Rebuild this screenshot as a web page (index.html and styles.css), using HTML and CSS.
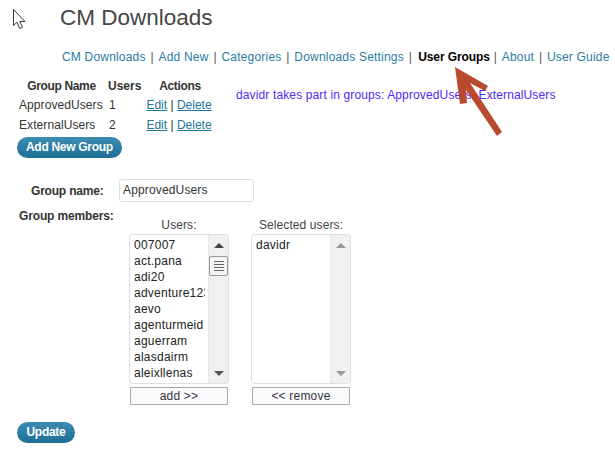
FILE: index.html
```html
<!DOCTYPE html>
<html lang="en">
<head>
<meta charset="utf-8">
<title>CM Downloads</title>
<link rel="stylesheet" href="styles.css">
</head>
<body>
<svg class="cursor" width="14" height="20" viewBox="0 0 14 20"><path d="M.5.500v16l3.500-3.300 2.700 6.300 2.800-1.200-2.700-5.800h5.200z" fill="#fff" stroke="#3a3a3a" stroke-width="1"/></svg>
<h1 class="title">CM Downloads</h1>
<nav class="nav">
  <a>CM Downloads</a><span class="sep">|</span><a>Add New</a><span class="sep">|</span><a>Categories</a><span class="sep">|</span><a>Downloads Settings</a><span class="sep">|</span><b>User Groups</b><span class="sep">|</span><a>About</a><span class="sep">|</span><a>User Guide</a>
</nav>
<div class="groups">
  <div class="group-list">
    <div class="grow head"><span class="c1 tight">Group Name</span><span class="c2">Users</span><span class="c3 tight">Actions</span></div>
    <div class="grow"><span class="c1 left">ApprovedUsers</span><span class="c2 left">1</span><span class="c3 acts"><u>Edit</u> | <u>Delete</u></span></div>
    <div class="grow"><span class="c1 left">ExternalUsers</span><span class="c2 left">2</span><span class="c3 acts"><u>Edit</u> | <u>Delete</u></span></div>
    <button class="pill add-group">Add New Group</button>
  </div>
  <p class="takes">davidr takes part in groups: ApprovedUsers, ExternalUsers</p>
</div>
<div class="name-row"><label class="name-label">Group name:</label><div class="input">ApprovedUsers</div></div>
<div class="members-label">Group members:</div>
<div class="pickers">
  <div class="picker">
    <div class="picker-title">Users:</div>
    <div class="listbox">
      <div class="items"><div>007007</div><div>act.pana</div><div>adi20</div><div>adventure123</div><div>aevo</div><div>agenturmeid</div><div>aguerram</div><div>alasdairm</div><div>aleixllenas</div></div>
      <div class="bar">
        <svg class="arrow-up" width="10" height="5" viewBox="0 0 10 5"><path d="M5 0l5 5H0z" fill="#444"/></svg>
        <div class="thumb"><i></i><i></i><i></i><i></i></div>
        <svg class="arrow-down" width="10" height="5" viewBox="0 0 10 5"><path d="M0 0h10L5 5z" fill="#555"/></svg>
      </div>
    </div>
    <button class="plain">add &gt;&gt;</button>
  </div>
  <div class="picker">
    <div class="picker-title">Selected users:</div>
    <div class="listbox">
      <div class="items"><div>davidr</div></div>
      <div class="bar">
        <svg class="arrow-up" width="10" height="5" viewBox="0 0 10 5"><path d="M5 0l5 5H0z" fill="#999"/></svg>
        <svg class="arrow-down" width="10" height="5" viewBox="0 0 10 5"><path d="M0 0h10L5 5z" fill="#999"/></svg>
      </div>
    </div>
    <button class="plain">&lt;&lt; remove</button>
  </div>
</div>
<button class="pill update">Update</button>
<svg class="red-arrow" width="48" height="70" viewBox="0 0 48 70"><path d="M0 0L33 19 30 24 15 16 47 65 42 69 11 23 12 36 5 37z" fill="#b84a30"/></svg>
</body>
</html>
```
FILE: styles.css
```css
html, body { margin: 0; padding: 0; }
body {
  position: relative;
  width: 615px;
  height: 449px;
  overflow: hidden;
  background: #fff;
  color: #333;
  font: 12px/16px "Liberation Sans", Arial, sans-serif;
}
.cursor { position: absolute; left: 13px; top: 9px; }
.title {
  margin: 0;
  padding: 3px 0 0 60px;
  height: 45px;
  box-sizing: border-box;
  font-size: 22.5px;
  line-height: 30px;
  font-weight: 400;
  color: #464646;
}
.nav { padding: 4px 0 0 62px; height: 31px; box-sizing: border-box; white-space: nowrap; }
.nav a { color: #2a7ba3; letter-spacing: 0.19px; }
.nav b { color: #000; letter-spacing: -0.1px; margin: 0 -1px 0 1.500px; }
.sep { color: #555; margin: 0 4.900px; }
.groups { display: flex; }
.group-list { width: 236px; padding-left: 17px; box-sizing: border-box; flex: none; }
.grow { display: flex; height: 20px; line-height: 20px; white-space: nowrap; }
.head { font-weight: 700; height: 19px; }
.c1 { width: 90px; text-align: center; flex: none; padding-right: 1px; box-sizing: border-box; }
.c1.left { text-align: left; padding-left: 2px; letter-spacing: 0.08px; }
.c2 { width: 37px; flex: none; padding-left: 1px; box-sizing: border-box; }
.c2.left { padding-left: 2px; }
.c3 { width: 80px; text-align: center; flex: none; padding-right: 8px; box-sizing: border-box; }
.c3.acts { padding-right: 10px; }
.c3 u { color: #21759b; }
.tight { letter-spacing: -0.35px; }
.pill {
  display: block;
  height: 21px;
  padding: 0 9px;
  border: 0;
  border-radius: 11px;
  background: linear-gradient(#3d8cb3, #1e6f96);
  color: #fff;
  letter-spacing: -0.3px;
  font: 700 12px/21px "Liberation Sans", Arial, sans-serif;
}
.add-group { margin-top: 2px; }
.takes { margin: 11px 0 0; color: #4a2cf5; white-space: nowrap; letter-spacing: 0.13px; }
.name-row { display: flex; align-items: center; margin-top: 21px; }
.name-label { width: 119px; padding-left: 31px; box-sizing: border-box; font-weight: 700; white-space: nowrap; letter-spacing: -0.2px; }
.input {
  width: 135px;
  height: 23px;
  box-sizing: border-box;
  padding-left: 3px;
  border: 1px solid #dfdfdf;
  border-radius: 3px;
  line-height: 21px;
  letter-spacing: 0.15px;
}
.members-label { margin: 6px 0 0 19px; font-weight: 700; line-height: 16px; letter-spacing: -0.15px; }
.pickers { display: flex; gap: 22px; margin: -7px 0 0 129px; }
.picker { width: 100px; }
.picker-title { text-align: center; line-height: 16px; height: 17px; letter-spacing: 0.1px; color: #444; }
.listbox { display: flex; width: 100px; height: 150px; box-sizing: border-box; border: 1px solid #dfdfdf; border-radius: 3px; overflow: hidden; }
.items { width: 78px; flex: none; padding: 2px 3px 0 4px; box-sizing: border-box; color: #222; line-height: 16px; white-space: nowrap; letter-spacing: 0.25px; }
.items div { overflow: hidden; }
.bar { flex: 1; background: #f0f0f0; border-left: 1px solid #e8e8e8; display: flex; flex-direction: column; align-items: center; }
.arrow-up { margin-top: 8px; }
.arrow-down { margin-top: auto; margin-bottom: 7px; }
.thumb { margin-top: 8px; width: 19px; height: 20px; box-sizing: border-box; border: 1px solid #999; border-radius: 2px; background: #f4f4f4; display: flex; flex-direction: column; justify-content: center; align-items: center; gap: 2px; }
.thumb i { display: block; width: 10px; height: 1px; background: #666; }
.plain {
  display: block;
  width: 98px;
  height: 18px;
  margin: 3px 0 0 1px;
  padding: 0;
  border: 1px solid #aaa;
  background: #fafafa;
  color: #334;
  font: 12px/16px "Liberation Sans", Arial, sans-serif;
  letter-spacing: 0.2px;
}
.update { margin: 17px 0 0 17px; padding: 0 9.500px; }
.red-arrow { position: absolute; left: 455px; top: 67px; }
```
